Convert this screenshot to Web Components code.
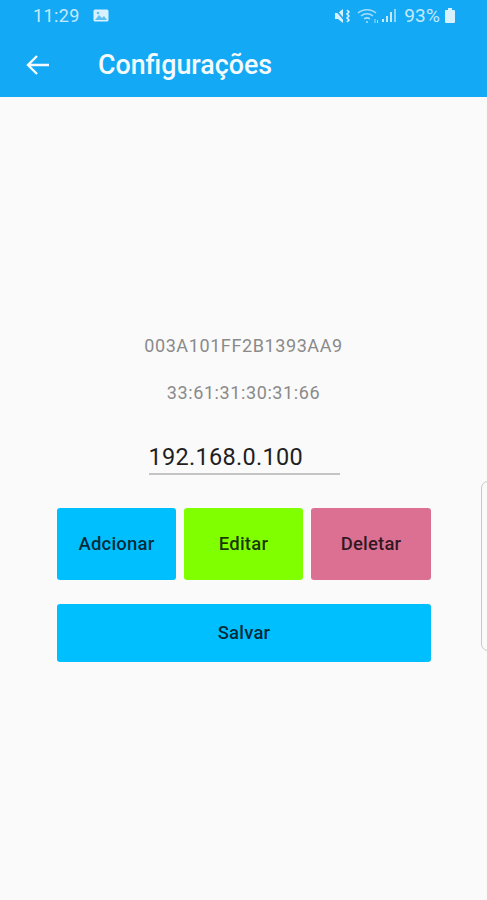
<!DOCTYPE html>
<html lang="pt">
<head>
<meta charset="utf-8">
<title>Configurações</title>
<style>
  html, body { margin: 0; height: 100%; }
  body { font-family: Roboto, "Liberation Sans", sans-serif; background: #fafafa; }
</style>
</head>
<body>
<settings-page></settings-page>

<script>
class AppStatusBar extends HTMLElement {
  constructor() {
    super();
    this.attachShadow({ mode: 'open' });
    this.shadowRoot.innerHTML = `
      <style>
        :host { display: flex; align-items: center; height: 31px; padding: 0 31px 0 33px; color: #c4eafd; font-size: 18px; }
        .time { letter-spacing: .4px; margin-right: 13px; }
        .right { margin-left: auto; display: flex; align-items: center; }
        svg { display: block; }
        .pct { margin: 0 4px 0 6px; font-size: 19px; letter-spacing: .2px; }
      </style>
      <span class="time">11:29</span>
      <svg width="16" height="13" viewBox="0 0 16 13"><rect x="0.5" y="0.5" width="15" height="12" rx="1.5" fill="#d8f1fe"/><path d="M2 11l4-5 3 3 2-2 3 4z" fill="#5cbff0"/><circle cx="5" cy="4" r="1.3" fill="#5cbff0"/></svg>
      <span class="right">
        <svg width="18" height="16" viewBox="0 0 18 16" fill="#d8f1fe"><path d="M1 5h3l5-4v14l-5-4H1z"/><path d="M1 1l11 13" stroke="#1ba8ef" stroke-width="1.6"/><path d="M13 2l2 2-2 2 2 2-2 2 2 2-2 2" fill="none" stroke="#d8f1fe" stroke-width="1.6"/></svg>
        <svg style="margin-left:5px" width="22" height="16" viewBox="0 0 22 16" fill="none" stroke="#a9defa" stroke-width="1.5"><path d="M1 5c5-4.500 13-4.500 18 0"/><path d="M4 8c3.500-3 8.500-3 12 0"/><path d="M7 11c2-1.500 4-1.500 6 0"/><circle cx="10" cy="14" r="1" fill="#a9defa" stroke="none"/><path d="M18 11v4M20.500 12v3" stroke-width="1"/></svg>
        <svg style="margin-left:2px" width="17" height="15" viewBox="0 0 17 15" fill="#c4eafd"><rect x="1" y="11" width="2" height="3"/><rect x="5" y="8" width="2" height="6"/><rect x="9" y="4" width="2" height="10"/><rect x="13" y="1" width="2" height="13" fill="#8fd3f7"/></svg>
        <span class="pct">93%</span>
        <svg width="12" height="15" viewBox="0 0 12 15" fill="#d8f1fe"><rect x="4" y="0" width="4" height="2"/><rect x="1" y="2" width="10" height="13" rx="1"/></svg>
      </span>
    `;
  }
}

class AppToolbar extends HTMLElement {
  constructor() {
    super();
    this.attachShadow({ mode: 'open' });
    this.shadowRoot.innerHTML = `
      <style>
        :host { display: flex; align-items: center; height: 66px; padding: 2px 0 0 26px; box-sizing: border-box; color: #f4fbff; }
        svg { display: block; margin-right: 48px; }
        .title { font-size: 26.800px; font-weight: 500; }
      </style>
      <svg width="24" height="22" viewBox="0 0 24 22" fill="none" stroke="#f4fbff" stroke-width="2.400"><path d="M23 11H2M11 2l-9 9 9 9"/></svg>
      <span class="title"><slot></slot></span>
    `;
  }
}

class IpField extends HTMLElement {
  constructor() {
    super();
    this.attachShadow({ mode: 'open' });
    this.shadowRoot.innerHTML = `
      <style>
        :host { display: block; width: 191px; box-sizing: border-box; border-bottom: 2px solid #c4c4c4; color: #1f1f1f; font-size: 23.500px; line-height: 28px; padding-bottom: 2px; letter-spacing: .3px; }
      </style>
      <slot></slot>
    `;
  }
}

class ActionButton extends HTMLElement {
  static get observedAttributes() {
    return ['color'];
  }

  constructor() {
    super();
    this.attachShadow({ mode: 'open' });
    this.render();
  }

  attributeChangedCallback() {
    this.render();
  }

  render() {
    this.shadowRoot.innerHTML = `
      <style>
        :host { display: flex; align-items: center; justify-content: center; border-radius: 3px; font-size: 18.500px; font-weight: 500; letter-spacing: .2px; color: rgba(0,0,0,.78);
          background: ${this.getAttribute('color') || '#00bfff'}; }
      </style>
      <slot></slot>
    `;
  }
}

class SettingsPage extends HTMLElement {
  constructor() {
    super();
    this.attachShadow({ mode: 'open' });
    this.shadowRoot.innerHTML = `
      <style>
        :host { display: flex; flex-direction: column; position: relative; height: 900px; overflow: hidden; background: #fafafa; }
        header { background: #14a9f4; height: 97px; flex: none; }
        main { display: flex; flex-direction: column; align-items: center; padding-top: 238px; }
        .id { color: #8a8a8a; font-size: 18px; line-height: 22px; letter-spacing: .6px; }
        .mac { margin-top: 25px; margin-left: 0; }
        ip-field { margin-top: 39px; margin-left: 1px; }
        .row { display: grid; grid-template-columns: 119px 119px 120px; column-gap: 8px; margin-top: 33px; width: 374px; height: 72px; margin-left: 1px; }
        .save { display: flex; margin-top: 24px; width: 374px; height: 58px; margin-left: 1px; }
        .save action-button { flex: 1; }
        .handle { position: absolute; right: -8px; top: 481px; width: 12px; height: 168px; border: 1px solid #c9c9c9; border-radius: 7px; }
      </style>
      <header>
        <app-status-bar></app-status-bar>
        <app-toolbar>Configurações</app-toolbar>
      </header>
      <main>
        <span class="id">003A101FF2B1393AA9</span>
        <span class="id mac">33:61:31:30:31:66</span>
        <ip-field>192.168.0.100</ip-field>
        <div class="row">
          <action-button color="#00bfff">Adcionar</action-button>
          <action-button color="#7fff00">Editar</action-button>
          <action-button color="#db7093">Deletar</action-button>
        </div>
        <div class="save"><action-button color="#00bfff">Salvar</action-button></div>
      </main>
      <div class="handle"></div>
    `;
  }
}

customElements.define('app-status-bar', AppStatusBar);
customElements.define('app-toolbar', AppToolbar);
customElements.define('ip-field', IpField);
customElements.define('action-button', ActionButton);
customElements.define('settings-page', SettingsPage);
</script>
</body>
</html>
